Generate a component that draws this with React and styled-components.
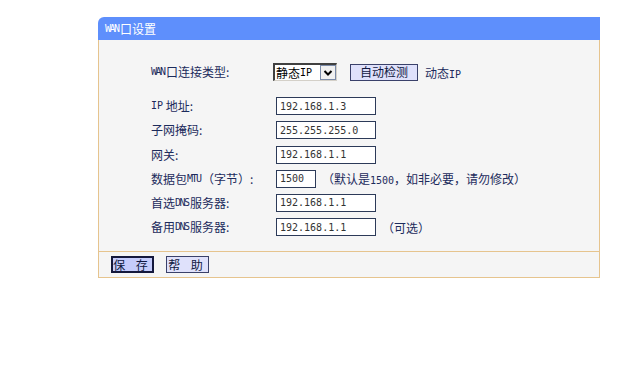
import React from "react";
import styled, { createGlobalStyle } from "styled-components";

const Global = createGlobalStyle`
  html, body { margin: 0; padding: 0; background: #ffffff; }
  body { font-family: "Noto Sans CJK SC", "Noto Sans", sans-serif; font-size: 12px; }
`;

const Page = styled.div`
  padding: 17px 0 0 98px;
`;

const Panel = styled.div`
  width: 502px;
`;

const Header = styled.div`
  height: 23px;
  background: #5e8ffc;
  border-top-left-radius: 6px;
  color: #ffffff;
  display: flex;
  align-items: center;
  padding-left: 7px;
  font-size: 12px;
  line-height: 1;
`;

const Body = styled.div`
  background: #f5f5f5;
  border-left: 1px solid #e6c48e;
  border-right: 1px solid #e6c48e;
  border-bottom: 1px solid #e6c48e;
  padding: 23px 0 15px 52px;
`;

const Form = styled.div`
  display: grid;
  grid-template-columns: 125px 1fr;
  grid-template-rows: 28px repeat(6, 18px);
  row-gap: 6.2px;
  align-items: start;
`;

const Label = styled.div`
  color: #1c2b5c;
  font-size: 12px;
  line-height: 18px;
  height: 18px;
  white-space: nowrap;
  display: flex;
  align-items: center;
`;

const Latin = styled.span`
  font-family: "DejaVu Sans Mono", "Liberation Mono", monospace;
  font-size: 10px;
  letter-spacing: ${(p) => (p.$small ? "-1.5px" : "0")};
  margin-right: ${(p) => (p.$small ? "1.5px" : "0")};
`;

const Cell = styled.div`
  display: flex;
  align-items: center;
  gap: ${(p) => p.$gap || 8}px;
  height: 18px;
`;

const TextInput = styled.input`
  box-sizing: border-box;
  width: ${(p) => p.$w || 100}px;
  height: 18px;
  margin: 0;
  padding: 0 3px;
  border: 1px solid #2c3a58;
  background: #ffffff;
  color: #333333;
  font-family: "DejaVu Sans Mono", "Liberation Mono", monospace;
  font-size: 10px;
  outline: none;
`;

const Select = styled.div`
  box-sizing: border-box;
  width: 64px;
  height: 18px;
  margin-left: -3px;
  display: flex;
  align-items: stretch;
  background: #ffffff;
  border-top: 2px solid #404040;
  border-left: 2px solid #404040;
  border-right: 1px solid #d4d0c8;
  border-bottom: 1px solid #d4d0c8;
  color: #000000;
`;

const SelectText = styled.span`
  flex: 1;
  display: flex;
  align-items: center;
  padding-left: 1px;
  font-size: 12px;
  line-height: 1;
`;

const Arrow = styled.span`
  width: 16px;
  display: flex;
  align-items: center;
  justify-content: center;
  background: #f0f0f0;
  border: 1px solid #7a8aa8;
  box-sizing: border-box;
`;

const Button = styled.button`
  box-sizing: border-box;
  height: ${(p) => p.$h || 17}px;
  width: ${(p) => p.$w}px;
  margin: 0;
  padding: 0;
  background: ${(p) => (p.$primary ? "#c5ccfb" : "#dfe1fb")};
  border: ${(p) => (p.$primary ? "2px solid #14183c" : "1px solid #3a416a")};
  color: #101840;
  font-family: "Noto Sans CJK SC", sans-serif;
  font-size: 12px;
  line-height: 1;
  letter-spacing: ${(p) => p.$spacing || 0}px;
  display: flex;
  align-items: center;
  justify-content: center;
  cursor: pointer;
`;

const Note = styled.span`
  color: #1c2b5c;
  font-size: 12px;
  white-space: nowrap;
`;

const Footer = styled.div`
  background: #f5f5f5;
  border-left: 1px solid #e6c48e;
  border-right: 1px solid #e6c48e;
  border-bottom: 1px solid #e6c48e;
  height: 25px;
  display: flex;
  align-items: center;
  gap: 12px;
  padding-left: 12px;
`;

export default function App() {
  return (
    <>
      <Global />
      <Page>
        <Panel>
          <Header>
            <Latin $small>WAN</Latin>口设置
          </Header>
          <Body>
            <Form>
              <Label>
                <Latin $small>WAN</Latin>口连接类型:
              </Label>
              <Cell $gap={13}>
                <Select>
                  <SelectText>
                    静态<Latin>IP</Latin>
                  </SelectText>
                  <Arrow>
                    <svg width="10" height="8" viewBox="0 0 10 8">
                      <path d="M1.5 2 L5 5.5 L8.5 2" fill="none" stroke="#000" strokeWidth="2" />
                    </svg>
                  </Arrow>
                </Select>
                <Cell $gap={7}>
                  <Button $w={68} $h={17}>自动检测</Button>
                  <Note>
                    动态<Latin>IP</Latin>
                  </Note>
                </Cell>
              </Cell>

              <Label>
                <Latin>IP</Latin>&nbsp;地址:
              </Label>
              <Cell>
                <TextInput defaultValue="192.168.1.3" />
              </Cell>

              <Label>子网掩码:</Label>
              <Cell>
                <TextInput defaultValue="255.255.255.0" />
              </Cell>

              <Label>网关:</Label>
              <Cell>
                <TextInput defaultValue="192.168.1.1" />
              </Cell>

              <Label>
                数据包<Latin $small>MTU</Latin>（字节）:
              </Label>
              <Cell $gap={6}>
                <TextInput $w={40} defaultValue="1500" />
                <Note>
                  （默认是<Latin>1500</Latin>，如非必要，请勿修改）
                </Note>
              </Cell>

              <Label>
                首选<Latin $small>DNS</Latin>服务器:
              </Label>
              <Cell>
                <TextInput defaultValue="192.168.1.1" />
              </Cell>

              <Label>
                备用<Latin $small>DNS</Latin>服务器:
              </Label>
              <Cell $gap={6}>
                <TextInput defaultValue="192.168.1.1" />
                <Note>（可选）</Note>
              </Cell>
            </Form>
          </Body>
          <Footer>
            <Button $primary $w={43} $spacing={4}>保 存</Button>
            <Button $w={43} $spacing={4}>帮 助</Button>
          </Footer>
        </Panel>
      </Page>
    </>
  );
}
